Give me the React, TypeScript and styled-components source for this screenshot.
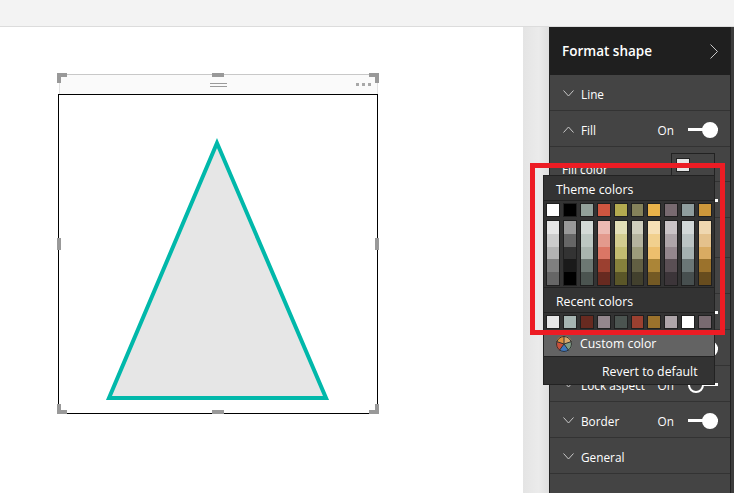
import React from 'react'
import styled, { createGlobalStyle } from 'styled-components'

const GlobalStyle = createGlobalStyle`
  html, body {
    margin: 0;
    height: 100%;
    overflow: hidden;
    background: #fff;
    font-family: "Open Sans", "Liberation Sans", sans-serif;
  }
`

const themeColors = ['#ffffff', '#000000', '#93a19a', '#cf5640', '#b4ab50', '#84815a', '#e8b24a', '#786a70', '#8f9d9d', '#cc973b']

const shades = [
  ['#e6e6e6', '#cccccc', '#b3b3b3', '#808080', '#666666'],
  ['#999999', '#666666', '#333333', '#1a1a1a', '#000000'],
  ['#d4dad7', '#bdc7c2', '#a9b4ae', '#6d7873', '#4b5450'],
  ['#ecbab2', '#e39a8d', '#db7665', '#9b4030', '#672a20'],
  ['#e2dfb7', '#d2cc8f', '#c2bc70', '#86813c', '#5a5628'],
  ['#cfcebd', '#b5b39e', '#9d9c7b', '#625f43', '#42402d'],
  ['#f6e0b6', '#f1d08e', '#edbf6d', '#ab8537', '#735924'],
  ['#c9c3c6', '#aea5a9', '#94878d', '#5a4f54', '#3c3539'],
  ['#d2d8d8', '#bbc4c4', '#a5b1b1', '#6b7676', '#474f4f'],
  ['#efd7b0', '#e4c18c', '#d9ab62', '#9b722c', '#674c1e'],
]

const recentColors = ['#e6e6e6', '#a6b5b2', '#672a20', '#94878d', '#4b5450', '#9b4030', '#9b722c', '#aea5a9', '#ffffff', '#786a70']

const Page = styled.div`
  width: 734px;
  height: 493px;
  display: flex;
  flex-direction: column;
  overflow: hidden;
`

const TopBar = styled.div`
  height: 26px;
  flex: none;
  background: #f3f3f3;
  border-bottom: 1px solid #dcdcdc;
`

const Main = styled.div`
  flex: 1;
  display: flex;
  position: relative;
  min-height: 0;
`

const Canvas = styled.div`
  width: 523px;
  flex: none;
  box-sizing: border-box;
  padding: 47px 0 0 59px;
  background: #fff;
`

const Visual = styled.div`
  width: 319px;
  position: relative;
`

const VisualHeader = styled.div`
  height: 20px;
  box-sizing: border-box;
  background: #fafafa;
  border-top: 1px solid #c8c8c8;
  border-left: 1px solid #e0e0e0;
  border-right: 1px solid #e0e0e0;
  display: flex;
  align-items: center;
  justify-content: center;
`

const Grip = styled.div`
  width: 17px;
  height: 2px;
  border-top: 1px solid #9a9a9a;
  border-bottom: 1px solid #9a9a9a;
`

const Dots = styled.div`
  position: absolute;
  right: 7px;
  top: 9px;
  display: flex;
  gap: 3px;

  span {
    width: 3px;
    height: 3px;
    background: #a8a8a8;
  }
`

const ShapeBox = styled.div`
  height: 320px;
  box-sizing: border-box;
  margin-left: -1px;
  width: 320px;
  border: 1px solid #000;
  background: #fff;

  svg {
    display: block;
  }
`

const Corner = styled.div<{ $v: 'top' | 'bottom'; $h: 'left' | 'right' }>`
  position: absolute;
  width: 6px;
  height: 6px;
  ${p => p.$v}: ${p => (p.$v === 'top' ? -1 : 0)}px;
  ${p => p.$h}: ${p => (p.$h === 'left' ? -2 : -1)}px;
  border-${p => p.$v}: 4px solid #999;
  border-${p => p.$h}: 4px solid #999;
`

const EdgeHandle = styled.div<{ $side: 'top' | 'bottom' | 'left' | 'right' }>`
  position: absolute;
  background: #999;
  ${p => p.$side === 'top' && 'width: 12px; height: 4px; left: 153px; top: -1px;'}
  ${p => p.$side === 'bottom' && 'width: 12px; height: 4px; left: 153px; bottom: 0;'}
  ${p => p.$side === 'left' && 'width: 4px; height: 12px; top: 164px; left: -2px;'}
  ${p => p.$side === 'right' && 'width: 4px; height: 12px; top: 164px; right: -1px;'}
`

const Gutter = styled.div`
  width: 26px;
  flex: none;
  background: linear-gradient(to right, #e4e4e4, #ebebeb 60%, #dedede);
`

const Panel = styled.div`
  flex: 1;
  display: flex;
  background: #444;
`

const PanelBody = styled.div`
  width: 181px;
  box-sizing: border-box;
  border-left: 1px solid #222;
  display: flex;
  flex-direction: column;
`

const PanelStrip = styled.div`
  flex: 1;
  border-left: 1px solid #222;
  background: #3d3d3d;
`

const PanelHeader = styled.div`
  height: 48px;
  flex: none;
  background: #1f1f1f;
  color: #fff;
  font-size: 13.5px;
  font-weight: 600;
  display: flex;
  align-items: center;
  justify-content: space-between;
  padding: 0 12px 0 12px;
`

const Row = styled.div<{ $height?: number }>`
  height: ${p => p.$height ?? 36}px;
  flex: none;
  box-sizing: border-box;
  border-bottom: 1px solid #333;
  background: #444;
  color: #fff;
  font-size: 11.8px;
  display: flex;
  align-items: center;
  padding: 2px 12px 0 13px;
`

const RowLabel = styled.span`
  margin-left: 7px;
  flex: 1;
`

const SubLabel = styled.span`
  flex: 1;
  color: #fff;
  padding-top: 8px;
  margin-left: -1px;
`

const FillBox = styled.div`
  width: 44px;
  height: 30px;
  box-sizing: border-box;
  border: 1px solid #222;
  padding: 4px;
  margin: 4px 3px 0 0;
  align-self: flex-start;
`

const FillChip = styled.div`
  width: 12px;
  height: 12px;
  background: #e6e6e6;
  border: 1px solid #222;
`

const OnLabel = styled.span`
  margin-right: 14px;
`

const Toggle = styled.div<{ $on?: boolean }>`
  width: 30px;
  height: 16px;
  flex: none;
  position: relative;
  display: flex;
  align-items: center;
  justify-content: ${p => (p.$on ? 'flex-end' : 'flex-start')};

  &::before {
    content: '';
    position: absolute;
    left: 0;
    right: 0;
    height: 3px;
    background: #fff;
  }

  span {
    width: 16px;
    height: 16px;
    box-sizing: border-box;
    border-radius: 50%;
    position: relative;
    background: ${p => (p.$on ? '#fff' : '#444')};
    border: 2px solid #fff;
  }
`

const Popup = styled.div`
  position: absolute;
  left: 543px;
  top: 148px;
  width: 172px;
  box-sizing: border-box;
  background: #333;
  border: 1px solid #222;
  color: #fff;
  font-size: 12.3px;
`

const PopupTitle = styled.div`
  height: 25px;
  box-sizing: border-box;
  padding: 5px 0 0 12px;
  line-height: 18px;
  border-bottom: 1px solid #222;
`

const SwatchRow = styled.div`
  display: flex;
  gap: 5px;
  padding: 3px 3px;
`

const Swatch = styled.div<{ $color: string }>`
  width: 12px;
  height: 12px;
  box-sizing: content-box;
  background: ${p => p.$color};
  outline: 1px solid #1f1f1f;
`

const ShadeGrid = styled.div`
  display: flex;
  gap: 5px;
  padding: 2px 3px 2px;
  border-bottom: 1px solid #222;
`

const ShadeColumn = styled.div`
  width: 12px;
  outline: 1px solid #1f1f1f;
  display: flex;
  flex-direction: column;
`

const Shade = styled.div<{ $color: string }>`
  height: 12.8px;
  background: ${p => p.$color};
`

const RecentSwatches = styled(SwatchRow)`
  padding-bottom: 2px;
`

const CustomRow = styled.div`
  height: 27px;
  box-sizing: border-box;
  background: #636363;
  border-bottom: 1px solid #222;
  display: flex;
  align-items: center;
  padding: 2px 0 0 12px;
  gap: 8px;
`

const RevertRow = styled.div`
  height: 27px;
  padding-left: 58px;
  line-height: 30px;
`

const Annotation = styled.div`
  position: absolute;
  left: 530px;
  top: 136px;
  width: 195px;
  height: 172px;
  box-sizing: border-box;
  border: 5px solid #ed1c24;
  pointer-events: none;
`

const Chevron = ({ up }: { up?: boolean }) => (
  <svg width="11" height="7" viewBox="0 0 11 7" fill="none" stroke="#c8c8c8" strokeWidth="1">
    <polyline points={up ? '0.5,6.5 5.5,1 10.5,6.5' : '0.5,0.5 5.5,6 10.5,0.5'} />
  </svg>
)

const ColorWheel = () => (
  <svg width="16" height="16" viewBox="-8 -8 16 16">
    <path d="M0 0V-8A8 8 0 0 1 7.6-2.5Z" fill="#d9a86c" />
    <path d="M0 0L7.6-2.5A8 8 0 0 1 4.7 6.5Z" fill="#7f9c86" />
    <path d="M0 0L4.7 6.5A8 8 0 0 1 -4.7 6.5Z" fill="#3f78c0" />
    <path d="M0 0L-4.7 6.5A8 8 0 0 1 -7.6-2.5Z" fill="#c8503c" />
    <path d="M0 0L-7.6-2.5A8 8 0 0 1 0-8Z" fill="#e08f3c" />
    <circle r="7.5" fill="none" stroke="#333" strokeWidth="1" />
    <path d="M0 0V-8M0 0L7.6-2.5M0 0L4.7 6.5M0 0L-4.7 6.5M0 0L-7.6-2.5" stroke="#333" strokeWidth="1" />
  </svg>
)

const App = () => (
  <Page>
    <GlobalStyle />
    <TopBar />
    <Main>
      <Canvas>
        <Visual>
          <VisualHeader>
            <Grip />
          </VisualHeader>
          <Dots>
            <span />
            <span />
            <span />
          </Dots>
          <ShapeBox>
            <svg width="318" height="318" viewBox="0 0 318 318">
              <polygon points="158,48 50,303 267,303" fill="#e6e6e6" stroke="#01b8aa" strokeWidth="4" />
            </svg>
          </ShapeBox>
          <Corner $v="top" $h="left" />
          <Corner $v="top" $h="right" />
          <Corner $v="bottom" $h="left" />
          <Corner $v="bottom" $h="right" />
          <EdgeHandle $side="top" />
          <EdgeHandle $side="bottom" />
          <EdgeHandle $side="left" />
          <EdgeHandle $side="right" />
        </Visual>
      </Canvas>
      <Gutter />
      <Panel>
        <PanelBody>
          <PanelHeader>
            Format shape
            <svg width="8" height="15" viewBox="0 0 8 15" fill="none" stroke="#c8c8c8" strokeWidth="1">
              <polyline points="0.5,0.5 7.5,7.5 0.5,14.5" />
            </svg>
          </PanelHeader>
          <Row>
            <Chevron />
            <RowLabel>Line</RowLabel>
          </Row>
          <Row>
            <Chevron up />
            <RowLabel>Fill</RowLabel>
            <OnLabel>On</OnLabel>
            <Toggle $on>
              <span />
            </Toggle>
          </Row>
          <Row $height={35}>
            <SubLabel>Fill color</SubLabel>
            <FillBox>
              <FillChip />
            </FillBox>
          </Row>
          <Row>
            <RowLabel />
            <Toggle>
              <span />
            </Toggle>
          </Row>
          <Row $height={40} />
          <Row />
          <Row>
            <RowLabel />
            <Toggle>
              <span />
            </Toggle>
          </Row>
          <Row>
            <RowLabel />
            <Toggle $on>
              <span />
            </Toggle>
          </Row>
          <Row>
            <Chevron />
            <RowLabel>Lock aspect</RowLabel>
            <OnLabel>On</OnLabel>
            <Toggle>
              <span />
            </Toggle>
          </Row>
          <Row>
            <Chevron />
            <RowLabel>Border</RowLabel>
            <OnLabel>On</OnLabel>
            <Toggle $on>
              <span />
            </Toggle>
          </Row>
          <Row>
            <Chevron />
            <RowLabel>General</RowLabel>
          </Row>
        </PanelBody>
        <PanelStrip />
      </Panel>
      <Popup>
        <PopupTitle>Theme colors</PopupTitle>
        <SwatchRow>
          {themeColors.map((c, i) => (
            <Swatch key={i} $color={c} />
          ))}
        </SwatchRow>
        <ShadeGrid>
          {shades.map((col, i) => (
            <ShadeColumn key={i}>
              {col.map((c, j) => (
                <Shade key={j} $color={c} />
              ))}
            </ShadeColumn>
          ))}
        </ShadeGrid>
        <PopupTitle>Recent colors</PopupTitle>
        <RecentSwatches>
          {recentColors.map((c, i) => (
            <Swatch key={i} $color={c} />
          ))}
        </RecentSwatches>
        <CustomRow>
          <ColorWheel />
          Custom color
        </CustomRow>
        <RevertRow>Revert to default</RevertRow>
      </Popup>
      <Annotation />
    </Main>
  </Page>
)

export default App
